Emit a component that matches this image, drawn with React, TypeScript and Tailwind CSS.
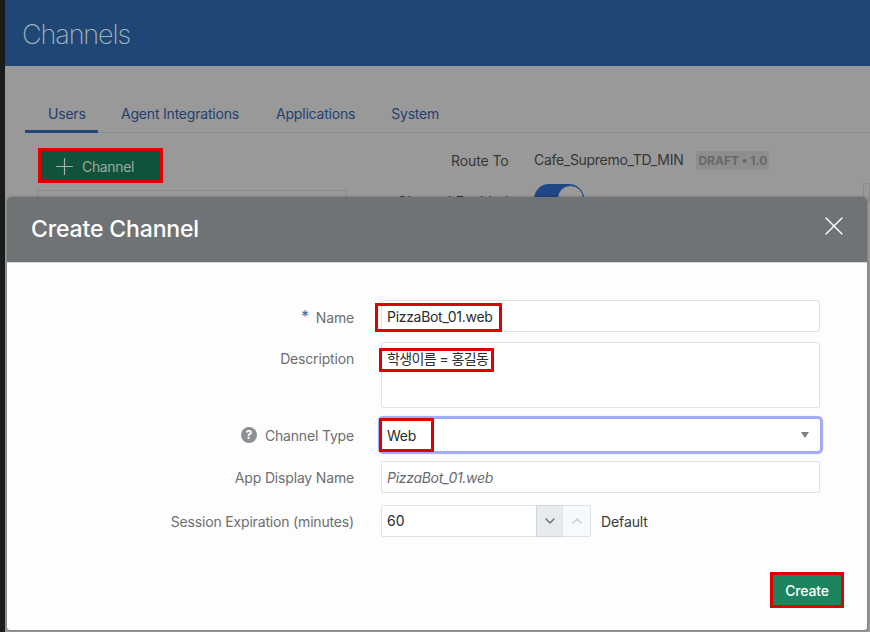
import React from "react";
import { ChevronDown, ChevronUp, Plus, X } from "lucide-react";

const font = { fontFamily: '"Inter","Noto Sans CJK KR",sans-serif' };

function Label({ children }: { children: React.ReactNode }) {
  return (
    <div className="flex items-center justify-end gap-1 text-[14px] tracking-[-0.17px] text-[#6d6f72]">
      {children}
    </div>
  );
}

function Field({ children, className = "" }: { children?: React.ReactNode; className?: string }) {
  return (
    <div className={`border border-[#dfe3e7] rounded-[2px] bg-white pl-[5px] text-[14px] text-[#2a2c2e] ${className}`}>
      {children}
    </div>
  );
}

export default function App() {
  return (
    <div className="relative w-[870px] h-[632px] overflow-hidden flex bg-[#1a1c1b]" style={font}>
      <div className="w-[5px] shrink-0" />
      <div className="flex-1 flex flex-col bg-[#999999] relative">
        <header className="h-[66px] bg-[#1f4776] pl-[17px] pt-[18px] text-[27px] leading-[34px] font-extralight tracking-[-1.1px] text-[#a5b1bd]">
          Channels
        </header>
        <nav className="mt-[34px] ml-[20px] h-[33px] border-b border-[#868d97] flex text-[14px] tracking-[-0.2px] text-[#24406f]">
          <div className="w-[73px] h-[33px] border-b-[3px] border-[#24467f] pl-[23px] pt-[3px]">Users</div>
          <div className="ml-[23px] pt-[3px]">Agent Integrations</div>
          <div className="ml-[37px] pt-[3px]">Applications</div>
          <div className="ml-[36px] pt-[3px]">System</div>
        </nav>
        <div className="flex">
          <div className="ml-[32px] w-[310px]">
            <button className="ml-[1px] mt-[15px] w-[125px] h-[35px] bg-[#10533a] border-[3px] border-[#e00000] flex items-center pl-[10px] gap-[4px] pt-[1px] text-[14px] tracking-[-0.35px] text-[#9aa8a2]">
              <Plus size={27} strokeWidth={1.1} className="text-[#a4b0aa]" />
              Channel
            </button>
            <div className="mt-[7px] h-[30px] border border-[#8b8b8b] rounded-[2px]" />
          </div>
          <div className="ml-[104px] pt-[15px] flex-1">
            <div className="flex items-center text-[14px] text-[#363636]">
              <span className="w-[83px] tracking-[-0.1px] pt-[2px]">Route To</span>
              <span className="tracking-[-0.3px]">Cafe_Supremo_TD_MIN</span>
              <span className="ml-[13px] mt-[1px] h-[19px] px-[2px] bg-[#8e8e8e] rounded-[2px] text-[12px] leading-[19px] font-bold tracking-[0px] text-[#696969]">
                DRAFT • 1.0
              </span>
            </div>
            <div className="flex mt-[13px]">
              <span className="w-[83px] text-[14px] text-[#363636] -ml-[54px] mr-[54px] whitespace-nowrap pt-[7px]">Channel Enabled</span>
              <div className="w-[50px] h-[30px] rounded-full bg-[#1f4786] flex justify-end">
                <div className="w-[27px] h-[27px] mt-[1px] rounded-full bg-[#9a9a9a] border border-[#1f4786]" />
              </div>
            </div>
          </div>
        </div>
        <div className="absolute right-0 top-[183px] w-[7px] h-[20px] border border-[#8b8b8b] rounded-l-[2px]" />
      </div>

      {/* Modal dialog */}
      <div className="absolute left-[7px] top-[197px] w-[860px] h-[433px] rounded-[3px] overflow-hidden flex flex-col bg-[#fdfdfd] shadow-[0_0_3px_rgba(0,0,0,0.3)]">
        <div className="h-[66px] shrink-0 bg-[#6f7376] flex items-center justify-between pl-[24px] pr-[17px] border-b border-[#d4dae2]">
          <h1 className="text-[23px] font-medium tracking-[-0.15px] text-white">Create Channel</h1>
          <X size={32} strokeWidth={1} className="text-white mb-[7px]" />
        </div>
        <div className="flex-1 relative pl-[374px] pt-[37px]">
          <div className="grid grid-cols-[439px] gap-y-[10px] relative">
            <div className="relative">
              <div className="absolute right-[466px] top-[1px] h-[32px] w-[300px] flex items-center justify-end">
                <Label><span className="text-[#3b64ad] text-[16px] leading-[16px] -mt-[2px] mr-[3px]">*</span>Name</Label>
              </div>
              <Field className="h-[32px] leading-[32px] tracking-[-0.3px]">PizzaBot_01.web</Field>
            </div>
            <div className="relative">
              <div className="absolute right-[466px] top-0 h-[32px] w-[300px] flex items-center justify-end">
                <Label>Description</Label>
              </div>
              <Field className="h-[66px] leading-[32px] tracking-[-0.6px]">학생이름 = 홍길동</Field>
            </div>
            <div className="relative mt-[1px]">
              <div className="absolute right-[466px] top-0 h-[32px] w-[300px] flex items-center justify-end">
                <Label>
                  <span className="w-[16px] h-[16px] rounded-full bg-[#8d8f92] text-white text-[12px] leading-[16px] font-bold text-center mr-[4px]">?</span>
                  Channel Type
                </Label>
              </div>
              <div className="h-[32px] flex items-center justify-between pl-[6px] pr-[11px] rounded-[2px] shadow-[0_0_1px_3px_#a0a9f5] bg-white text-[14px] tracking-[-0.25px] text-[#2a2c2e]">
                Web
                <span className="w-0 h-0 border-x-[4px] border-t-[6px] border-x-transparent border-t-[#7f8083]" />
              </div>
            </div>
            <div className="relative">
              <div className="absolute right-[466px] top-0 h-[32px] w-[300px] flex items-center justify-end">
                <Label>App Display Name</Label>
              </div>
              <Field className="h-[32px] leading-[32px] italic tracking-[-0.3px] text-[#666a6e]">PizzaBot_01.web</Field>
            </div>
            <div className="relative mt-[2px]">
              <div className="absolute right-[466px] top-0 h-[32px] w-[300px] flex items-center justify-end">
                <Label>Session Expiration (minutes)</Label>
              </div>
              <div className="flex items-center h-[32px]">
                <div className="w-[156px] h-[32px] pl-[5px] leading-[30px] border border-[#dfe3e7] rounded-l-[2px] bg-white text-[14px] text-[#2a2c2e]">60</div>
                <div className="w-[27px] h-[32px] -ml-px border border-[#cfd5da] bg-[#e8ebee] flex items-center justify-center">
                  <ChevronDown size={16} strokeWidth={2.2} className="text-[#6e7377]" />
                </div>
                <div className="w-[29px] h-[32px] -ml-px border border-[#dfe3e7] rounded-r-[2px] bg-[#f8f9fa] flex items-center justify-center">
                  <ChevronUp size={16} strokeWidth={2.2} className="text-[#c9cdd0]" />
                </div>
                <span className="ml-[10px] text-[14px] tracking-[-0.1px] text-[#3a3c3e]">Default</span>
              </div>
            </div>
          </div>
          <button className="absolute left-[763px] top-[309px] w-[74px] h-[36px] border-[3px] border-[#e00000] bg-[#1c8560] text-[14px] font-medium tracking-[-0.2px] text-white">
            Create
          </button>
        </div>
      </div>

      {/* Red annotation boxes over the form */}
      <div className="absolute left-[375px] top-[303px] w-[127px] h-[29px] border-[3px] border-[#e00000]" />
      <div className="absolute left-[379px] top-[348px] w-[115px] h-[24px] border-[3px] border-[#e00000]" />
      <div className="absolute left-[379px] top-[418px] w-[55px] h-[34px] border-[3px] border-[#e00000]" />
    </div>
  );
}
